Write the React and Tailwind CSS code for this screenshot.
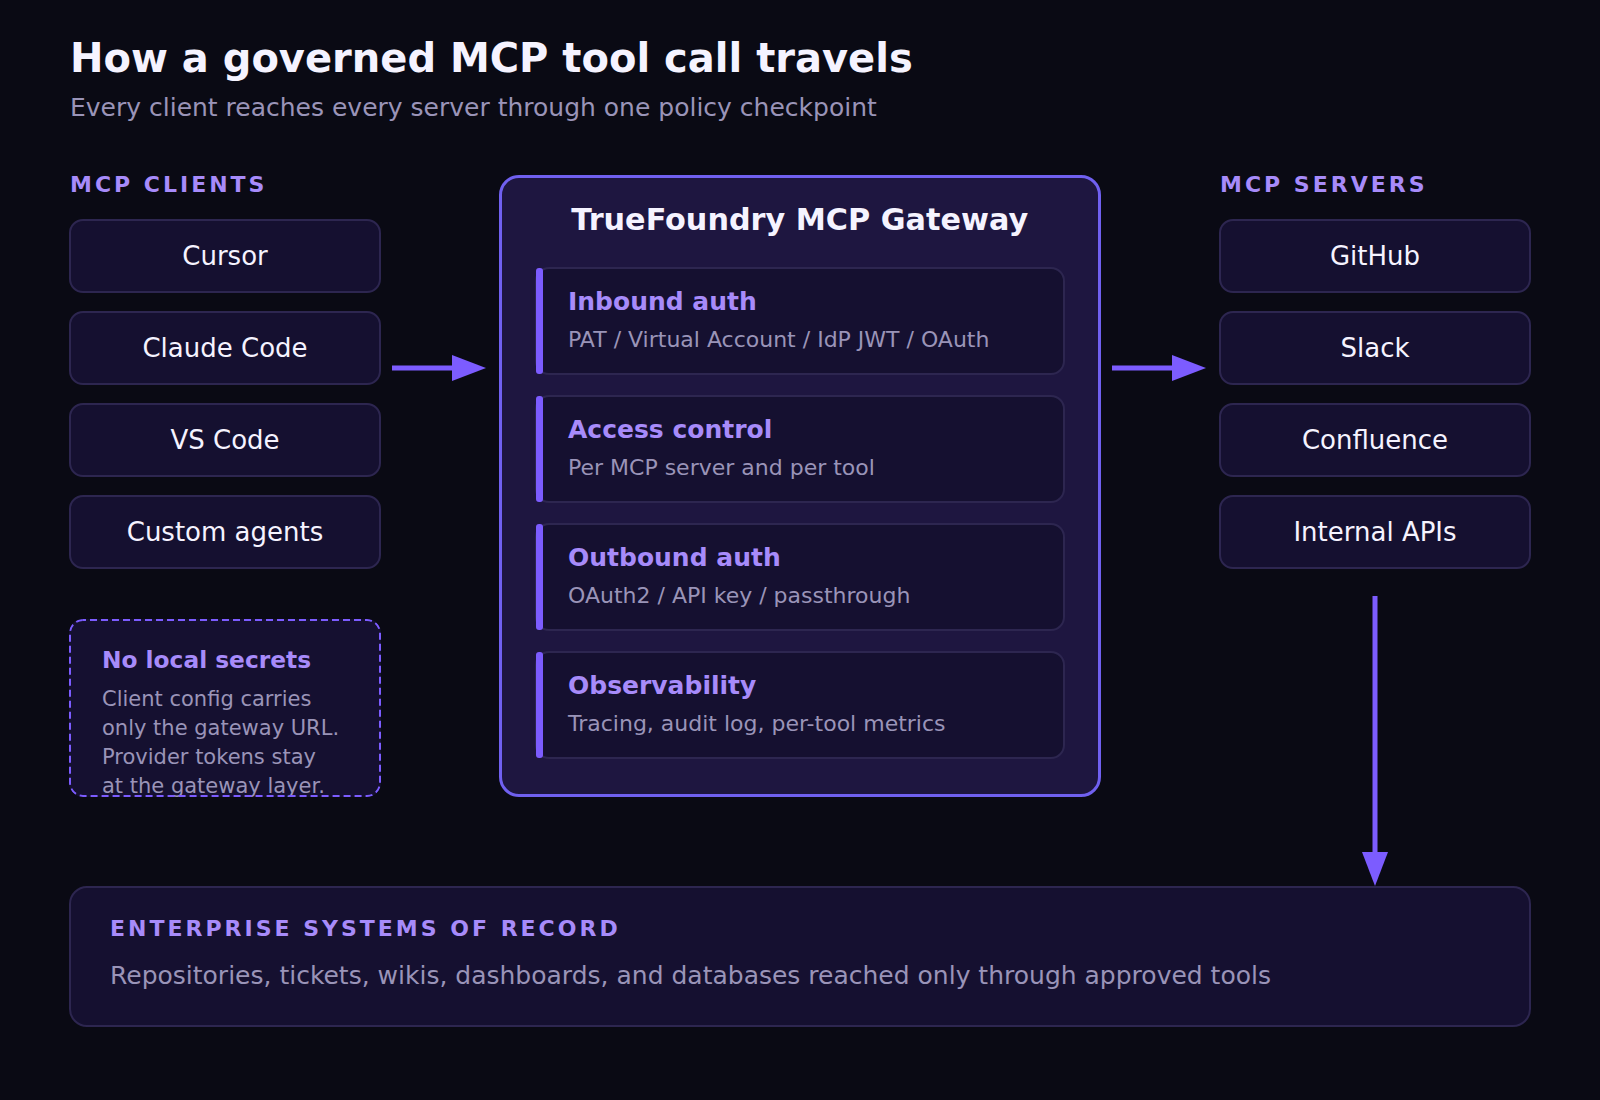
const clients = ["Cursor", "Claude Code", "VS Code", "Custom agents"];
const servers = ["GitHub", "Slack", "Confluence", "Internal APIs"];
const stages = [
  { title: "Inbound auth", text: "PAT / Virtual Account / IdP JWT / OAuth" },
  { title: "Access control", text: "Per MCP server and per tool" },
  { title: "Outbound auth", text: "OAuth2 / API key / passthrough" },
  { title: "Observability", text: "Tracing, audit log, per-tool metrics" },
];

const ArrowRight = () => (
  <svg width="94" height="26" viewBox="0 0 94 26" className="block">
    <rect x="0" y="10.5" width="62" height="5" fill="#7c5cff" />
    <polygon points="60,0 94,13 60,26" fill="#7c5cff" />
  </svg>
);

const NodeCard = ({ name }) => (
  <div className="h-[74px] flex items-center justify-center rounded-[14px] border-2 border-[#2d2650] bg-[#151030] text-[26px] text-[#f5f3ff]">
    {name}
  </div>
);

const ColumnLabel = ({ children }) => (
  <div className="h-[44.5px] text-[22px] leading-[20px] pt-[0.5px] pl-[1px] font-bold tracking-[3px] text-[#a78bfa]">
    {children}
  </div>
);

export default function App() {
  return (
    <div className="w-[1600px] h-[1100px] bg-[#0a0a14] px-[69px] pt-[34px] font-['DejaVu_Sans',sans-serif] overflow-hidden">
      {/* header */}
      <h1 className="pl-[1px] text-[40px] leading-[48px] font-bold text-[#f5f3ff]">How a governed MCP tool call travels</h1>
      <p className="pl-[1px] mt-[10px] text-[25px] leading-[32px] text-[#9a94b8]">Every client reaches every server through one policy checkpoint</p>

      <div className="mt-[50.5px] grid grid-cols-[312px_117.5px_602.5px_118px_312px] items-start">
        {/* clients */}
        <div>
          <ColumnLabel>MCP CLIENTS</ColumnLabel>
          <div className="flex flex-col gap-[18px]">
            {clients.map((c) => (
              <NodeCard key={c} name={c} />
            ))}
          </div>
          <div className="relative mt-[50px] h-[178px] overflow-hidden rounded-[14px] bg-[#151030] pl-[33px] pt-[27px]">
            <div className="text-[23.3px] leading-[28px] font-bold text-[#a78bfa]">No local secrets</div>
            <div className="mt-[11px] text-[21px] leading-[29px] text-[#9a94b8]">
              Client config carries
              <br />
              only the gateway URL.
              <br />
              Provider tokens stay
              <br />
              at the gateway layer.
            </div>
            {/* dashed outline */}
            <svg width="312" height="178" className="absolute left-0 top-0">
              <rect x="1" y="1" width="310" height="176" rx="13" fill="none" stroke="#7c5cff" strokeWidth="2" strokeDasharray="7 4" strokeDashoffset="4" />
            </svg>
          </div>
        </div>

        <div className="pl-[11px] pt-[180.5px]">
          <ArrowRight />
        </div>

        {/* gateway */}
        <div className="h-[622px] rounded-[20px] border-[3px] border-[#7060f0] bg-[#1e1640] px-[33.5px] pt-[23px]">
          <div className="text-center text-[30.25px] leading-[38px] font-bold text-[#f5f3ff]">TrueFoundry MCP Gateway</div>
          <div className="mt-[28.5px] flex flex-col gap-[20px]">
            {stages.map((s) => (
              <div key={s.title} className="relative h-[108px] rounded-[14px] border-2 border-[#2d2650] bg-[#151030] pl-[31px] pt-[18px]">
                <div className="absolute left-[-1px] top-[-1px] bottom-[-1px] w-[7px] rounded-[3px] bg-[#7c5cff]" />
                <div className="text-[25px] leading-[30px] font-bold text-[#a78bfa]">{s.title}</div>
                <div className="mt-[9px] text-[22px] leading-[28px] text-[#9a94b8]">{s.text}</div>
              </div>
            ))}
          </div>
        </div>

        <div className="pl-[11px] pt-[180.5px]">
          <ArrowRight />
        </div>

        {/* servers */}
        <div>
          <ColumnLabel>MCP SERVERS</ColumnLabel>
          <div className="flex flex-col gap-[18px]">
            {servers.map((s) => (
              <NodeCard key={s} name={s} />
            ))}
          </div>
          <div className="mt-[27px] flex justify-center">
            <svg width="26" height="290" viewBox="0 0 26 290" className="block">
              <rect x="10.5" y="0" width="5" height="260" fill="#7c5cff" />
              <polygon points="0,256 26,256 13,290" fill="#7c5cff" />
            </svg>
          </div>
        </div>
      </div>

      {/* systems of record */}
      <div className="h-[141px] rounded-[18px] border-2 border-[#2d2650] bg-[#151030] pl-[39px] pt-[27px]">
        <div className="text-[22px] leading-[28px] font-bold tracking-[3px] text-[#a78bfa]">ENTERPRISE SYSTEMS OF RECORD</div>
        <div className="mt-[17px] text-[25px] leading-[32px] text-[#9a94b8]">
          Repositories, tickets, wikis, dashboards, and databases reached only through approved tools
        </div>
      </div>
    </div>
  );
}
